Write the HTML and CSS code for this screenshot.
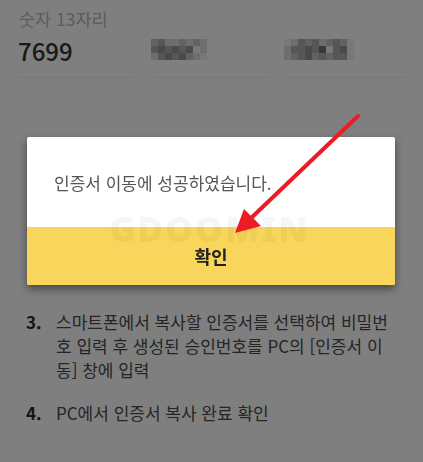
FILE: index.html
```html
<!DOCTYPE html>
<html lang="ko">
<head>
<meta charset="utf-8">
<link rel="stylesheet" href="styles.css">
</head>
<body>
<div class="page">
  <div class="fields">
    <div class="field">
      <div class="label">숫자 13자리</div>
      <div class="value">7699</div>
    </div>
    <div class="field">
      <div class="label">&nbsp;</div>
      <div class="value">
        <div class="pix pix1">
          <i class="p2"></i><i class="p3"></i><i class="p1"></i><i class="p1"></i><i class="p2"></i><i class="p1"></i><i class="p2"></i><i class="p1"></i>
          <i class="p3"></i><i class="p4"></i><i class="p3"></i><i class="p4"></i><i class="p3"></i><i class="p4"></i><i class="p0"></i><i class="p1"></i>
          <i class="p1"></i><i class="p3"></i><i class="p4"></i><i class="p3"></i><i class="p4"></i><i class="p2"></i><i class="p1"></i><i class="p0"></i>
        </div>
      </div>
    </div>
    <div class="field">
      <div class="label">&nbsp;</div>
      <div class="value">
        <div class="pix pix2">
          <i class="p0"></i><i class="p1"></i><i class="p3"></i><i class="p2"></i><i class="p3"></i><i class="p1"></i><i class="p2"></i><i class="p3"></i><i class="p2"></i><i class="p0"></i>
          <i class="p1"></i><i class="p3"></i><i class="p3"></i><i class="p4"></i><i class="p3"></i><i class="p5"></i><i class="p0"></i><i class="p3"></i><i class="p4"></i><i class="p0"></i>
          <i class="p1"></i><i class="p2"></i><i class="p3"></i><i class="p4"></i><i class="p2"></i><i class="p3"></i><i class="p2"></i><i class="p3"></i><i class="p3"></i><i class="p0"></i>
        </div>
      </div>
    </div>
  </div>

  <ol class="steps">
    <li class="step step-1"><span class="num">1.</span><span class="txt">공동인증서 사이트 접속 후 [인증서 이동] 메뉴에서 스마트폰으로 복사 선택</span></li>
    <li class="step step-2"><span class="num">2.</span><span class="txt">스마트폰에서 인증서 앱 실행 후 [인증서 가져오기] 메뉴 선택</span></li>
    <li class="step"><span class="num">3.</span><span class="txt">스마트폰에서 복사할 인증서를 선택하여 비밀번호 입력 후 생성된 승인번호를 PC의 [인증서 이동] 창에 입력</span></li>
    <li class="step"><span class="num">4.</span><span class="txt">PC에서 인증서 복사 완료 확인</span></li>
  </ol>
</div>

<div class="overlay"></div>

<div class="dialog">
  <div class="dialog-body">인증서 이동에 성공하였습니다.</div>
  <div class="dialog-btn">확인</div>
  <div class="watermark">GDOOMIN</div>
</div>

<svg class="arrow" width="423" height="462" viewBox="0 0 423 462">
  <line x1="358" y1="116" x2="248" y2="221" stroke="#ec1c24" stroke-width="4" stroke-linecap="round"/>
  <polygon points="235,233 244,209 261,226" fill="#ec1c24"/>
</svg>
</body>
</html>
```

FILE: styles.css
```css
* { box-sizing: border-box; }
html, body {
  margin: 0;
  padding: 0;
  background: #ffffff;
  width: 423px;
  height: 462px;
  overflow: hidden;
  font-family: "Noto Sans CJK KR", "Noto Sans", sans-serif;
}
.page {
  padding: 8px 18px 0 18px;
}
.fields {
  display: grid;
  grid-template-columns: 117px 117px 117px;
  column-gap: 18px;
}
.field {
  border-bottom: 1px solid #eeeeee;
  padding-bottom: 10px;
}
.label {
  font-size: 17.5px;
  line-height: 22px;
  color: #b8b8b8;
  margin-bottom: 5px;
  padding-left: 1px;
}
.value {
  font-size: 24px;
  line-height: 32px;
  font-weight: 500;
  color: #333333;
  height: 32px;
  display: flex;
  align-items: center;
}
.pix {
  display: grid;
  grid-auto-rows: 7px;
  margin-top: -4px;
}
.pix i { display: block; }
.pix1 { grid-template-columns: repeat(8, 7px); margin-left: -2px; }
.pix2 { grid-template-columns: repeat(10, 7px); margin-left: -4px; }
.p0 { background: #f0f0f0; }
.p1 { background: #dcdcdc; }
.p2 { background: #c4c4c4; }
.p3 { background: #acacac; }
.p4 { background: #949494; }
.p5 { background: #707070; }

.steps {
  list-style: none;
  margin: 60px 0 0 0;
  padding: 0 7px 0 8px;
}
.step {
  display: flex;
  margin-bottom: 19px;
  font-size: 17px;
  line-height: 24px;
}
.step-1 { margin-bottom: 26px; }
.step-2 { margin-bottom: 50px; }
.num {
  flex: 0 0 30px;
  font-weight: 700;
  color: #2a2a2a;
}
.txt {
  flex: 1;
  color: #4a4a4a;
}

.overlay {
  position: fixed;
  inset: 0;
  background: rgba(0, 0, 0, 0.5);
}
.dialog {
  position: absolute;
  left: 27px;
  top: 137px;
  width: 368px;
  border-radius: 2px;
  overflow: hidden;
  background: #ffffff;
  box-shadow: 0 4px 8px rgba(0, 0, 0, 0.45);
}
.dialog-body {
  height: 90px;
  display: flex;
  align-items: center;
  padding-left: 27px;
  font-size: 17px;
  color: #555555;
}
.dialog-btn {
  height: 58px;
  background: #f8d55b;
  display: flex;
  align-items: center;
  justify-content: center;
  font-size: 18px;
  font-weight: 700;
  color: #222222;
}
.watermark {
  position: absolute;
  left: 80px;
  top: 72px;
  width: 205px;
  text-align: center;
  font-family: "Noto Sans", sans-serif;
  font-size: 35px;
  line-height: 40px;
  font-weight: 900;
  letter-spacing: 2px;
  color: rgba(0, 0, 0, 0.035);
}
.arrow {
  position: absolute;
  left: 0;
  top: 0;
}
```
